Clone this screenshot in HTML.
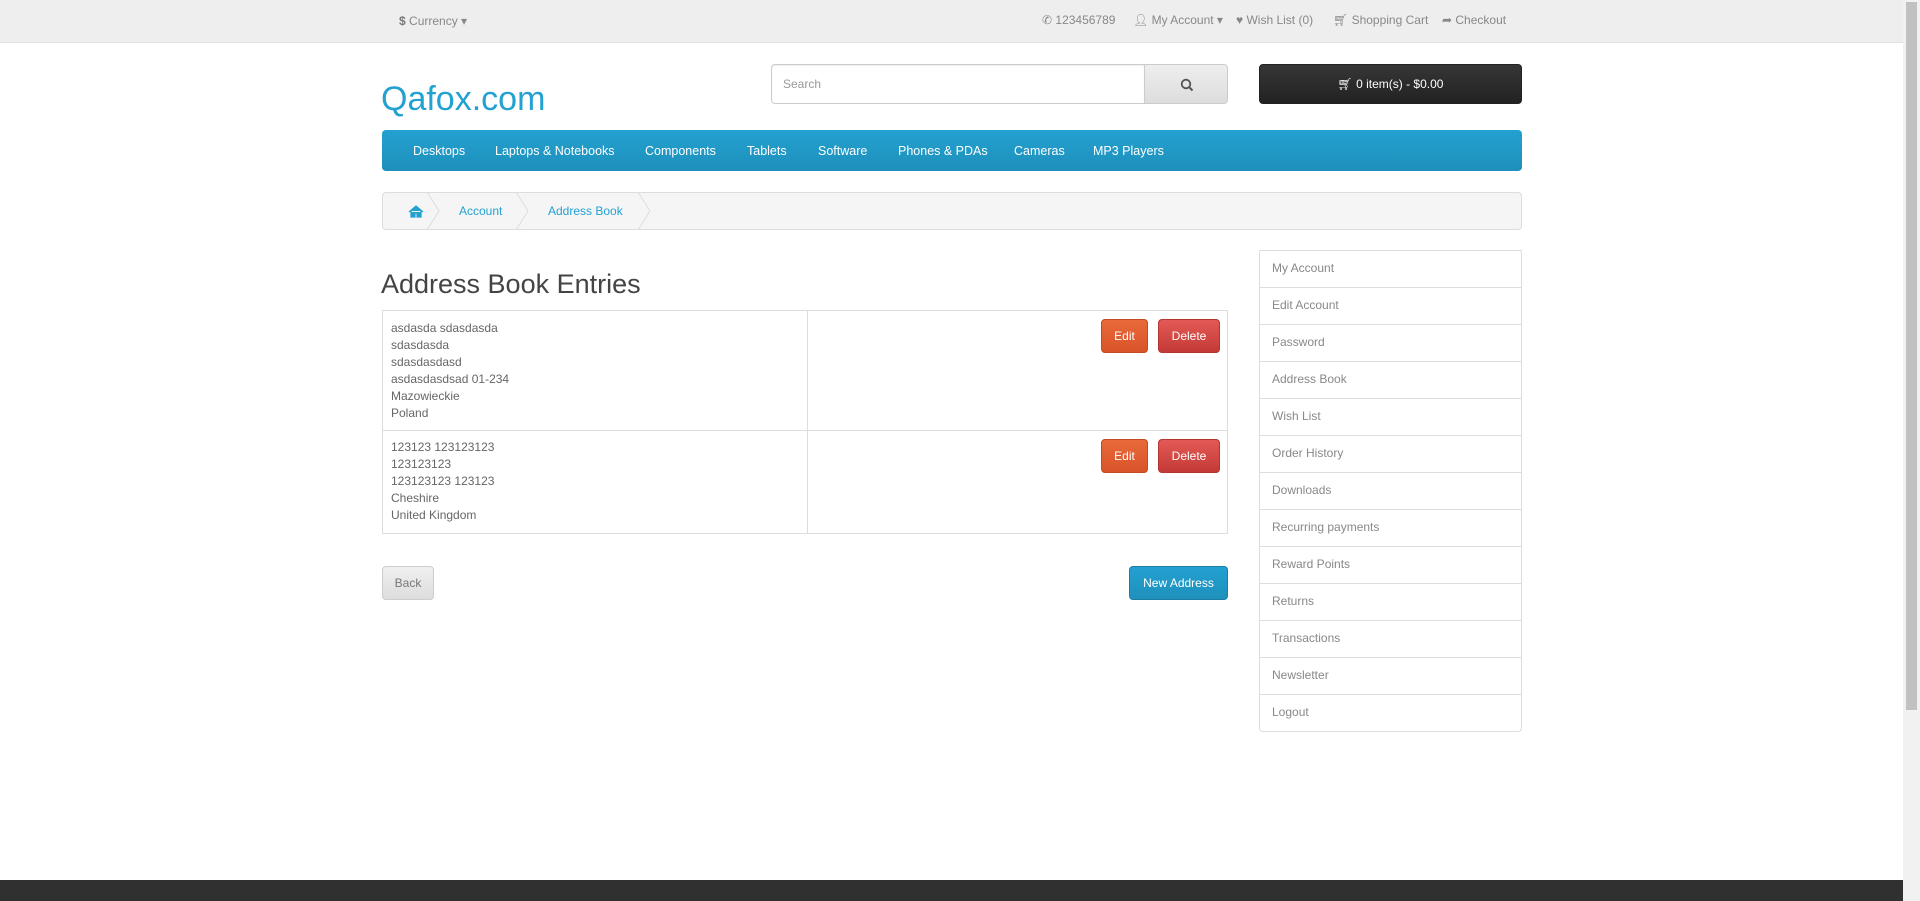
<!DOCTYPE html>
<html><head><meta charset="utf-8"><style>
*{box-sizing:border-box;margin:0;padding:0}
body{width:1920px;height:901px;overflow:hidden;background:#fff;font-family:"Liberation Sans",sans-serif;font-size:12px;color:#666;position:relative}
.a{position:absolute;white-space:nowrap}
#top{position:absolute;left:0;top:0;width:1903px;height:43px;background:#eee;border-bottom:1px solid #e2e2e2}
.tl{color:#888;font-size:12px;top:13px}
#scroll{position:absolute;left:1903px;top:0;width:17px;height:901px;background:#f1f1f1}
#thumb{position:absolute;left:1906px;top:2px;width:11px;height:708px;background:#c1c1c1}
.btn{position:absolute;border-radius:4px;color:#fff;font-size:12px;text-align:center;line-height:33px}
.nav{color:#fff;font-size:12.5px;top:144px}
.sb{position:absolute;left:1259px;width:263px;height:38px;border:1px solid #ddd;border-top:none;color:#888;padding-left:12px;line-height:37px}
</style></head><body>
<div id="top"></div>
<div class="a tl" style="left:399px;top:14px"><b style="color:#777">$</b> Currency ▾</div>
<div class="a tl" style="left:1042px">✆ 123456789</div>
<div class="a tl" style="left:1133px">👤︎ My Account ▾</div>
<div class="a tl" style="left:1236px">♥ Wish List (0)</div>
<div class="a tl" style="left:1333px">🛒︎ Shopping Cart</div>
<div class="a tl" style="left:1442px">➦ Checkout</div>

<div class="a" style="left:381px;top:80px;font-size:34px;color:#23a1d1">Qafox.com</div>
<div class="a" style="left:771px;top:64px;width:374px;height:40px;border:1px solid #ccc;border-radius:4px 0 0 4px;background:#fff;box-shadow:inset 0 1px 1px rgba(0,0,0,.075)"><span style="position:absolute;left:11px;top:12px;color:#999;font-size:12px">Search</span></div>
<div class="a" style="left:1144px;top:64px;width:84px;height:40px;border:1px solid #ccc;border-radius:0 4px 4px 0;background:linear-gradient(#eee,#ddd)">
<svg style="position:absolute;left:35px;top:13px" width="14" height="14" viewBox="0 0 14 14"><circle cx="6" cy="6" r="4.3" fill="none" stroke="#555" stroke-width="1.8"/><line x1="9" y1="9" x2="12.5" y2="12.5" stroke="#555" stroke-width="2"/></svg></div>
<div class="a" style="left:1259px;top:64px;width:263px;height:40px;border:1px solid #222;border-radius:4px;background:linear-gradient(#363636,#222);color:#fff;text-align:center;line-height:38px;font-size:12px">🛒︎ 0 item(s) - $0.00</div>

<div class="a" style="left:382px;top:130px;width:1140px;height:41px;border-radius:4px;background:linear-gradient(#23a1d1,#1f90bb);border-bottom:1px solid #1f90bb"></div>
<div class="a nav" style="left:413px">Desktops</div>
<div class="a nav" style="left:495px">Laptops &amp; Notebooks</div>
<div class="a nav" style="left:645px">Components</div>
<div class="a nav" style="left:747px">Tablets</div>
<div class="a nav" style="left:818px">Software</div>
<div class="a nav" style="left:898px">Phones &amp; PDAs</div>
<div class="a nav" style="left:1014px">Cameras</div>
<div class="a nav" style="left:1093px">MP3 Players</div>

<div class="a" style="left:382px;top:192px;width:1140px;height:38px;border:1px solid #ddd;border-radius:4px;background:#f5f5f5"></div>
<svg class="a" style="left:382px;top:192px" width="300" height="38"><path d="M45 0 L57 19 L45 38 M134 0 L146 19 L134 38 M256 0 L268 19 L256 38" fill="none" stroke="#ddd"/><path d="M27 20 L34 14 L41 20 M29 19 V25 H33 V21 H35 V25 H39 V19" fill="#23a1d1" stroke="#23a1d1" stroke-width="1.2"/></svg>
<div class="a" style="left:459px;top:204px;color:#23a1d1">Account</div>
<div class="a" style="left:548px;top:204px;color:#23a1d1">Address Book</div>

<div class="a" style="left:381px;top:269px;font-size:27px;color:#444">Address Book Entries</div>
<div class="a" style="left:382px;top:310px;width:846px;height:224px;border:1px solid #ddd"></div>
<div class="a" style="left:382px;top:430px;width:846px;height:1px;background:#ddd"></div>
<div class="a" style="left:807px;top:310px;width:1px;height:224px;background:#ddd"></div>
<div class="a" style="left:391px;top:320px;line-height:17px">asdasda sdasdasda<br>sdasdasda<br>sdasdasdasd<br>asdasdasdsad 01-234<br>Mazowieckie<br>Poland</div>
<div class="a" style="left:391px;top:439px;line-height:17px">123123 123123123<br>123123123<br>123123123 123123<br>Cheshire<br>United Kingdom</div>
<div class="btn" style="left:1101px;top:319px;width:47px;height:34px;background:linear-gradient(#e86a3a,#d9532a);border:1px solid #c34a25">Edit</div>
<div class="btn" style="left:1158px;top:319px;width:62px;height:34px;background:linear-gradient(#e35a56,#c33a36);border:1px solid #b33430">Delete</div>
<div class="btn" style="left:1101px;top:439px;width:47px;height:34px;background:linear-gradient(#e86a3a,#d9532a);border:1px solid #c34a25">Edit</div>
<div class="btn" style="left:1158px;top:439px;width:62px;height:34px;background:linear-gradient(#e35a56,#c33a36);border:1px solid #b33430">Delete</div>
<div class="btn" style="left:382px;top:566px;width:52px;height:34px;background:linear-gradient(#f0f0f0,#ddd);border:1px solid #ccc;color:#777">Back</div>
<div class="btn" style="left:1129px;top:566px;width:99px;height:34px;background:linear-gradient(#23a1d1,#1f90bb);border:1px solid #1b7ea5">New Address</div>

<div class="a" style="left:1259px;top:250px;width:263px;height:1px;background:#ddd"></div>
<div class="sb" style="top:250px;border-radius:4px 4px 0 0">My Account</div>
<div class="sb" style="top:287px">Edit Account</div>
<div class="sb" style="top:324px">Password</div>
<div class="sb" style="top:361px">Address Book</div>
<div class="sb" style="top:398px">Wish List</div>
<div class="sb" style="top:435px">Order History</div>
<div class="sb" style="top:472px">Downloads</div>
<div class="sb" style="top:509px">Recurring payments</div>
<div class="sb" style="top:546px">Reward Points</div>
<div class="sb" style="top:583px">Returns</div>
<div class="sb" style="top:620px">Transactions</div>
<div class="sb" style="top:657px">Newsletter</div>
<div class="sb" style="top:694px;border-radius:0 0 4px 4px">Logout</div>

<div class="a" style="left:0;top:880px;width:1903px;height:21px;background:#303030"></div>
<div id="scroll"></div><div id="thumb"></div>
</body></html>
